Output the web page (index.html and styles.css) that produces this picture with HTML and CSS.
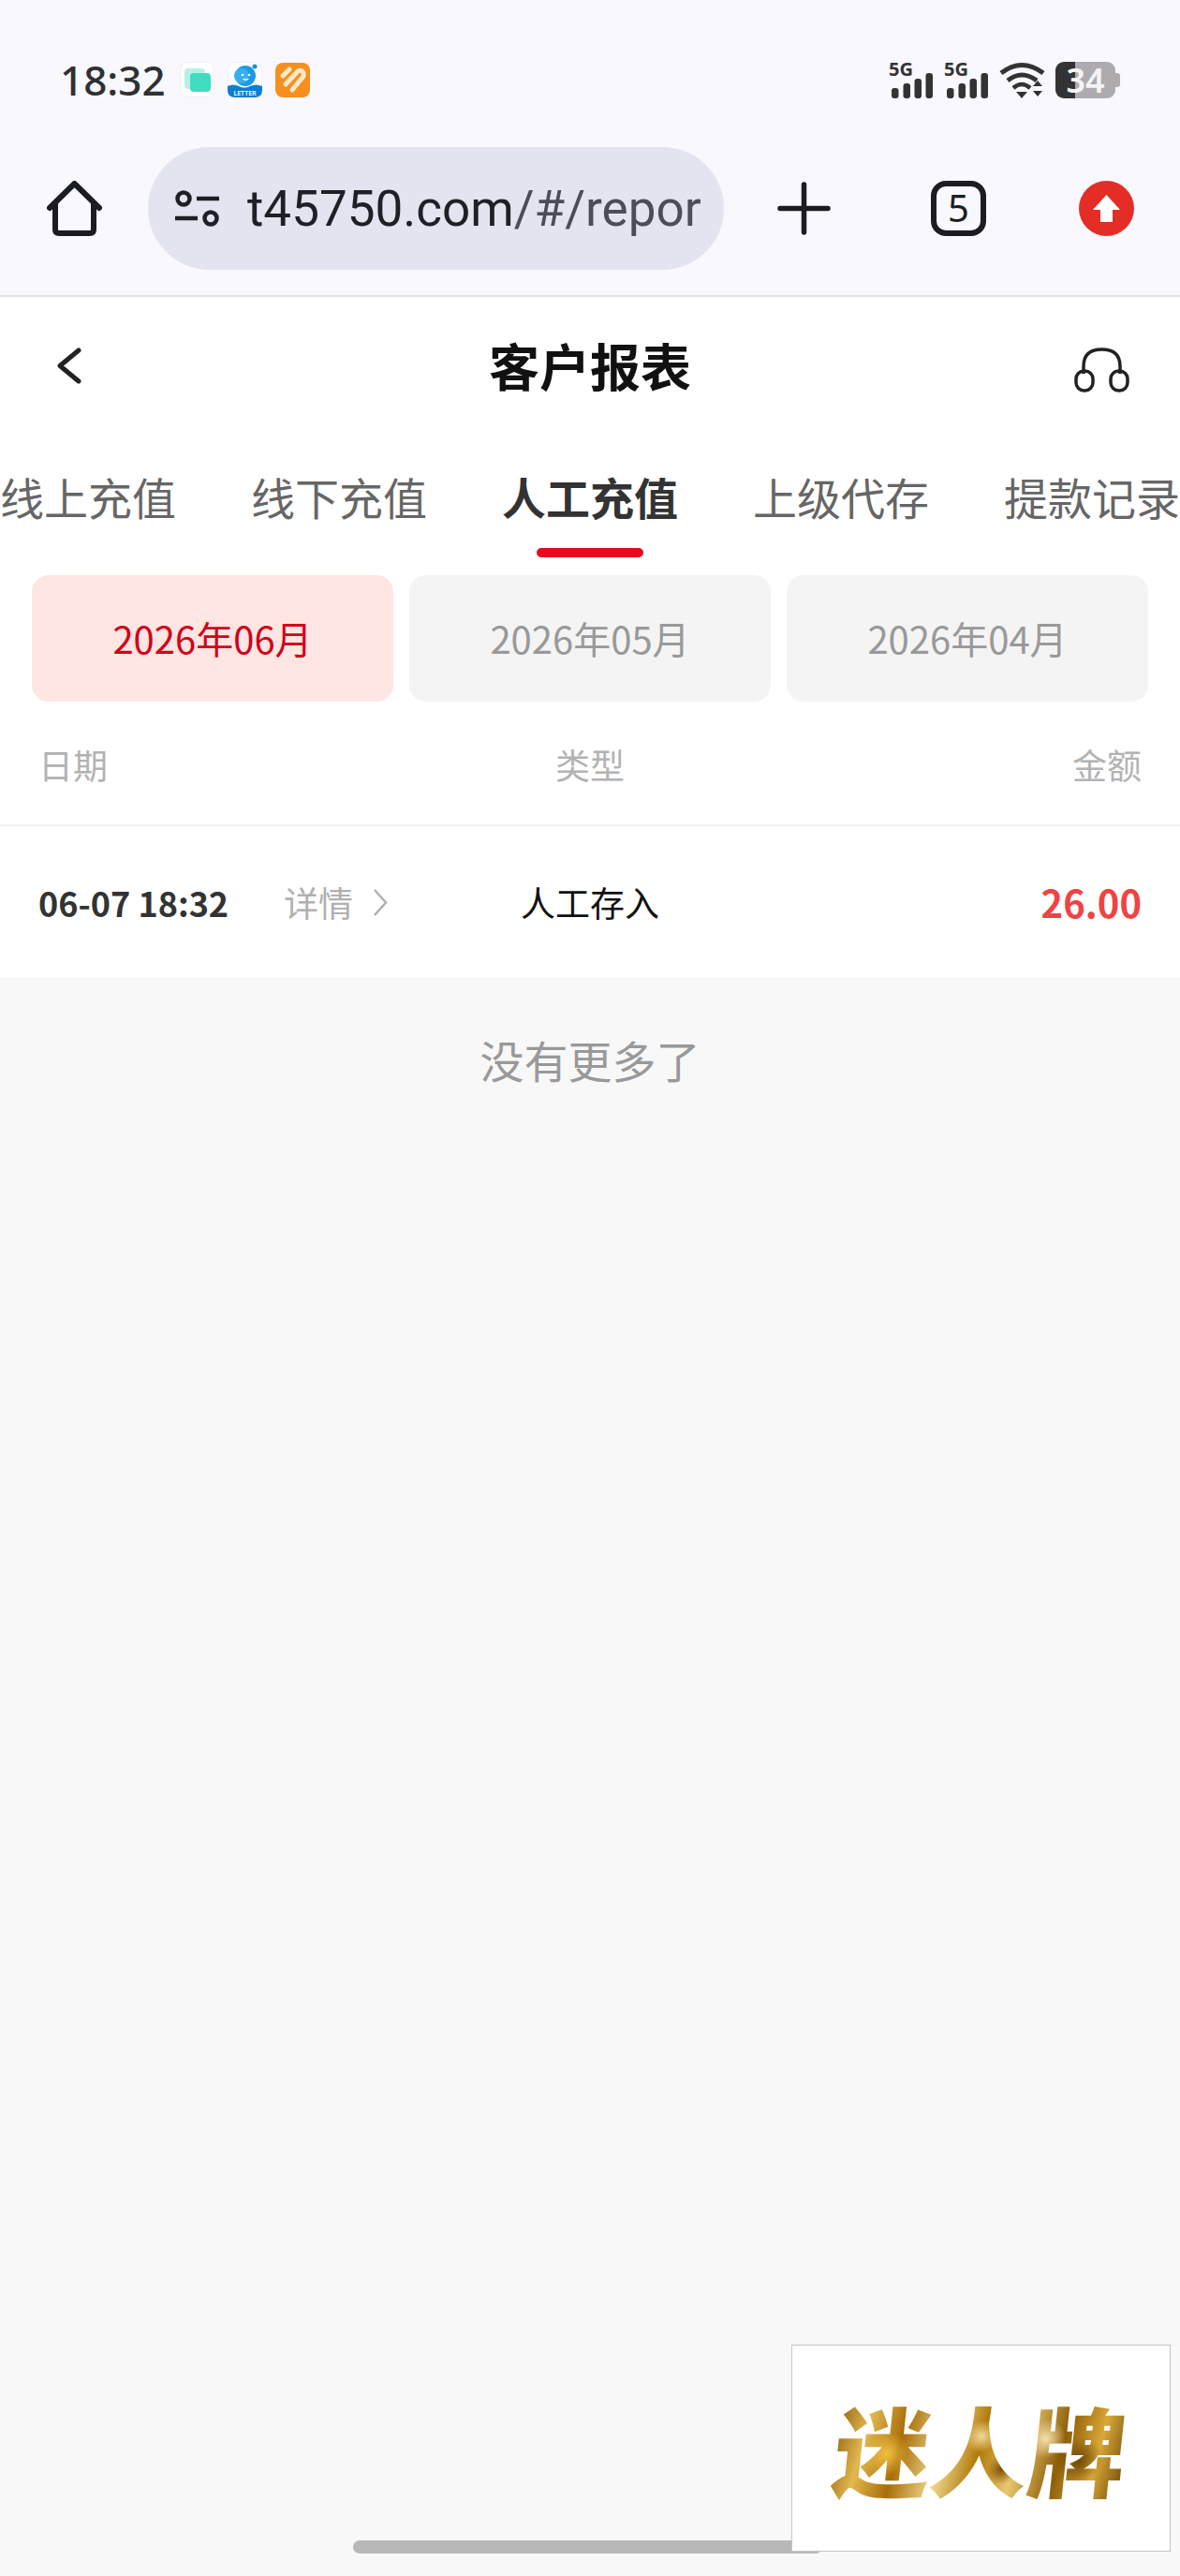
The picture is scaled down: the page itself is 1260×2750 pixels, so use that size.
FILE: index.html
```html
<!DOCTYPE html>
<html lang="zh-CN">
<head>
  <meta charset="UTF-8">
  <meta name="viewport" content="width=device-width, initial-scale=1.0">
  <title>客户报表</title>
  <link rel="stylesheet" href="styles.css">
</head>
<body>
  <div class="screen">
    <header class="browser">
      <div class="status-bar">
        <span class="time">18:32</span>
        <svg class="app-icon" viewBox="0 0 37 38">
          <rect x="0.5" y="0.5" width="36" height="37" rx="8" fill="#fff" stroke="#eef0f4"/>
          <rect x="5" y="7" width="22" height="22" rx="4" fill="#b4f3e2"/>
          <rect x="11" y="12" width="22" height="20" rx="4" fill="#3fdcc0"/>
        </svg>
        <svg class="app-icon" viewBox="0 0 37 38">
          <rect x="0.5" y="0.5" width="36" height="37" rx="8" fill="#fff" stroke="#eef0f4"/>
          <path d="M0 26 Q6 23 12 26 T24 26 T37 26 V30 Q37 38 29 38 H8 Q0 38 0 30 Z" fill="#0d7fd0"/>
          <circle cx="19" cy="15" r="11" fill="#1c9ae6"/>
          <circle cx="15" cy="15" r="8" fill="#36aef0"/>
          <circle cx="29" cy="5" r="2.5" fill="#1c8ed6"/>
          <circle cx="16" cy="14" r="1.3" fill="#fff"/>
          <circle cx="23" cy="14" r="1.3" fill="#fff"/>
          <path d="M16 18 Q19.5 22 23 18 Z" fill="#fff"/>
          <text class="letter" x="18.5" y="35.5" text-anchor="middle">LETTER</text>
        </svg>
        <svg class="app-icon" viewBox="0 0 37 38">
          <rect x="0" y="1" width="37" height="37" rx="8" fill="#f78f1e"/>
          <path d="M8 15 L15 8 M11 24 L24 10 Q28 8 30 12 Q31 15 28 18 L18 30" fill="none" stroke="#ffe9c9" stroke-width="5" stroke-linecap="round"/>
        </svg>
        <div class="status-right">
          <div class="signal">
            <span class="net">5G</span>
            <svg class="bars" viewBox="0 0 47 39">
              <rect x="3" y="28" width="7.5" height="11" rx="3"/>
              <rect x="15.5" y="23" width="7.5" height="16" rx="3"/>
              <rect x="27.5" y="18" width="7.5" height="21" rx="3"/>
              <rect x="39.5" y="12" width="7.5" height="27" rx="3"/>
            </svg>
          </div>
          <div class="signal">
            <span class="net">5G</span>
            <svg class="bars" viewBox="0 0 47 39">
              <rect x="3" y="28" width="7.5" height="11" rx="3"/>
              <rect x="15.5" y="23" width="7.5" height="16" rx="3"/>
              <rect x="27.5" y="18" width="7.5" height="21" rx="3"/>
              <rect x="39.5" y="12" width="7.5" height="27" rx="3"/>
            </svg>
          </div>
          <svg class="wifi" viewBox="0 0 49 39">
            <path d="M2 12 Q24 -5 47 12" fill="none" stroke="#333" stroke-width="5"/>
            <path d="M9 20 Q24 8 40 20" fill="none" stroke="#333" stroke-width="5"/>
            <path d="M15 28 Q24 20 33 28" fill="none" stroke="#333" stroke-width="4.5"/>
            <path d="M18 32 H30 L24 39 Z" fill="#333"/>
            <path d="M36 26 L41 20 L46 26 Z M36 31 H46 L41 37 Z" fill="#333"/>
          </svg>
          <div class="battery">34</div>
        </div>
      </div>
      <div class="toolbar">
        <svg class="tool-icon" viewBox="0 0 59 59">
          <path d="M3 29 L29.5 3 L56 29" fill="none" stroke="#1c1d22" stroke-width="6" stroke-linecap="round" stroke-linejoin="round"/>
          <path d="M9 24 V52 Q9 56 13 56 H46 Q50 56 50 52 V24" fill="none" stroke="#1c1d22" stroke-width="6"/>
        </svg>
        <div class="address">
          <svg class="site-icon" viewBox="0 0 49 39">
            <circle cx="10" cy="9" r="6.5" fill="none" stroke="#1f2026" stroke-width="4.5"/>
            <path d="M24 9 H48 M1 30 H25" stroke="#1f2026" stroke-width="4.5"/>
            <circle cx="39" cy="30" r="6.5" fill="none" stroke="#1f2026" stroke-width="4.5"/>
          </svg>
          <div class="url">t45750.com<span class="url-path">/#/repor</span></div>
        </div>
        <svg class="tool-icon plus" viewBox="0 0 59 59">
          <path d="M4 29.5 H55 M29.5 4 V55" stroke="#1c1d22" stroke-width="5.5" stroke-linecap="round"/>
        </svg>
        <div class="tab-count">5</div>
        <svg class="tool-icon upgrade" viewBox="0 0 59 59">
          <circle cx="29.5" cy="29.5" r="29.5" fill="#e52d27"/>
          <path d="M29.5 15 L44 31 H36 V44 H23 V31 H15 Z" fill="#fff"/>
        </svg>
      </div>
    </header>

    <div class="content">
      <div class="nav">
        <svg class="back" viewBox="0 0 27 39">
          <path d="M24 3 L4 19.5 L24 36" fill="none" stroke="#222" stroke-width="5" stroke-linecap="round" stroke-linejoin="round"/>
        </svg>
        <h1 class="title">客户报表</h1>
        <svg class="headset" viewBox="0 0 59 48">
          <path d="M10 28 V20 Q10 2 29.5 2 Q49 2 49 20 V28" fill="none" stroke="#222" stroke-width="3.5"/>
          <rect x="2" y="25" width="18" height="21" rx="8.5" fill="none" stroke="#222" stroke-width="3.5"/>
          <rect x="39" y="25" width="18" height="21" rx="8.5" fill="none" stroke="#222" stroke-width="3.5"/>
        </svg>
      </div>

      <div class="tabs">
        <div class="tab">线上充值</div>
        <div class="tab">线下充值</div>
        <div class="tab active">人工充值</div>
        <div class="tab">上级代存</div>
        <div class="tab">提款记录</div>
      </div>

      <div class="months">
        <div class="month active">2026年06月</div>
        <div class="month">2026年05月</div>
        <div class="month">2026年04月</div>
      </div>

      <div class="table-head">
        <span>日期</span>
        <span class="center">类型</span>
        <span class="right">金额</span>
      </div>
      <div class="table-row">
        <div class="date-cell">
          <span class="date">06-07 18:32</span>
          <span class="detail">详情</span>
          <svg class="chevron" viewBox="0 0 16 31">
            <path d="M2 2 L14 15.5 L2 29" fill="none" stroke="#b0b0b0" stroke-width="2.5"/>
          </svg>
        </div>
        <span class="type center">人工存入</span>
        <span class="amount right">26.00</span>
      </div>

      <div class="no-more">没有更多了</div>
    </div>

    <div class="home-bar"></div>
    <div class="float-ad"><span class="brand">迷人牌</span></div>
  </div>
</body>
</html>
```

FILE: styles.css
```css
* {
  box-sizing: border-box;
}

body {
  margin: 0;
  font-family: "Noto Sans CJK SC", "Noto Sans", sans-serif;
  background-color: #f8f8f8;
}

.screen {
  position: relative;
  width: 1260px;
  height: 2750px;
  overflow: hidden;
  display: flex;
  flex-direction: column;
}

/* browser chrome */
.browser {
  height: 317px;
  background-color: #f8f8fe;
  border-bottom: 2px solid #e2e2ea;
}

.status-bar {
  height: 157px;
  padding: 66px 69px 0 64px;
  display: flex;
  align-items: flex-start;
}

.time {
  width: 128px;
  height: 38px;
  line-height: 38px;
  font-family: "Noto Sans", sans-serif;
  font-size: 44px;
  font-weight: 500;
  color: #2f3033;
}

.app-icon {
  width: 37px;
  height: 38px;
  margin-right: 14px;
}

.letter {
  font-family: "Noto Sans", sans-serif;
  font-size: 7px;
  font-weight: 600;
  fill: #fff;
}

.status-right {
  margin-left: auto;
  display: flex;
  align-items: flex-start;
}

.signal {
  position: relative;
  width: 47px;
  height: 39px;
  margin-right: 12px;
}

.bars {
  display: block;
  width: 47px;
  height: 39px;
  fill: #333;
}

.net {
  position: absolute;
  left: 0;
  top: 0;
  font-family: "Noto Sans", sans-serif;
  font-size: 20px;
  font-weight: 700;
  line-height: 16px;
  color: #333;
}

.wifi {
  width: 49px;
  height: 39px;
  margin-right: 11px;
}

.battery {
  position: relative;
  width: 64px;
  height: 39px;
  border-radius: 9px;
  background: linear-gradient(90deg, #333 21px, #aeabb0 21px);
  color: #f4f4f4;
  font-family: "Noto Sans", sans-serif;
  font-size: 36px;
  font-weight: 600;
  line-height: 39px;
  text-align: center;
}

.battery::after {
  content: "";
  position: absolute;
  right: -5px;
  top: 12px;
  width: 5px;
  height: 15px;
  border-radius: 0 3px 3px 0;
  background-color: #aeabb0;
}

.toolbar {
  height: 131px;
  padding-left: 50px;
  display: flex;
  align-items: center;
}

.tool-icon {
  width: 59px;
  height: 59px;
  flex: none;
}

.address {
  width: 615px;
  height: 131px;
  margin-left: 49px;
  padding: 0 26px 0 28px;
  border-radius: 66px;
  background-color: #e3e4ef;
  display: flex;
  align-items: center;
}

.site-icon {
  width: 49px;
  height: 39px;
  flex: none;
  margin-right: 29px;
}

.url {
  flex: 1;
  white-space: nowrap;
  font-family: Roboto, sans-serif;
  font-size: 53px;
  color: #1f2026;
}

.url-path {
  color: #4c4d58;
}

.plus {
  margin-left: 56px;
}

.tab-count {
  width: 59px;
  height: 59px;
  margin-left: 106px;
  border: 6px solid #1c1d22;
  border-radius: 16px;
  font-family: "Noto Sans", sans-serif;
  font-size: 40px;
  line-height: 46px;
  text-align: center;
  color: #1c1d22;
}

.upgrade {
  margin-left: 99px;
}

/* page */
.content {
  flex: 1;
  background-color: #f8f8f8;
}

.nav {
  height: 145px;
  padding: 0 54px 0 60px;
  background-color: white;
  display: grid;
  grid-template-columns: 1fr auto 1fr;
  align-items: center;
}

.back {
  width: 27px;
  height: 39px;
  margin-top: 2px;
}

.title {
  margin: 0 6px 0 0;
  font-size: 54px;
  font-weight: 700;
  color: #111;
}

.headset {
  width: 59px;
  height: 48px;
  margin-top: 11px;
  justify-self: end;
}

.tabs {
  height: 140px;
  padding-bottom: 6px;
  background-color: white;
  display: flex;
  align-items: center;
  gap: 80px;
  overflow: hidden;
}

.tab {
  position: relative;
  flex: none;
  font-size: 47px;
  color: #666;
}

.tab.active {
  font-weight: 700;
  color: #333;
}

.tab.active::after {
  content: "";
  position: absolute;
  left: 37px;
  right: 37px;
  bottom: -31px;
  height: 10px;
  border-radius: 5px;
  background-color: #e60a20;
}

.months {
  padding: 12px 34px 0 34px;
  background-color: white;
  display: grid;
  grid-template-columns: repeat(3, 1fr);
  gap: 17px;
}

.month {
  height: 135px;
  border-radius: 18px;
  background-color: #f4f4f4;
  font-size: 40px;
  line-height: 135px;
  text-align: center;
  color: #999;
}

.month.active {
  background-color: #ffe6e2;
  color: #d0021b;
}

.table-head {
  height: 133px;
  padding: 2px 41px 0 41px;
  border-bottom: 2px solid #f3f3f3;
  background-color: white;
  display: grid;
  grid-template-columns: 1fr auto 1fr;
  align-items: center;
  font-size: 37px;
  color: #b3b3b3;
}

.table-row {
  height: 162px;
  padding: 0 41px;
  background-color: white;
  display: grid;
  grid-template-columns: 1fr auto 1fr;
  align-items: center;
}

.center {
  text-align: center;
}

.right {
  text-align: right;
}

.date-cell {
  display: flex;
  align-items: center;
}

.date {
  width: 262px;
  font-size: 36px;
  font-weight: 700;
  color: #333;
}

.detail {
  font-size: 37px;
  color: #b0b0b0;
}

.chevron {
  width: 16px;
  height: 31px;
  margin-left: 21px;
}

.type {
  font-size: 37px;
  color: #111;
}

.amount {
  font-size: 40px;
  font-weight: 700;
  color: #ef4444;
}

.no-more {
  padding-top: 52px;
  font-size: 47px;
  text-align: center;
  color: #999;
}

/* overlays */
.home-bar {
  position: absolute;
  left: 377px;
  top: 2712px;
  width: 501px;
  height: 14px;
  border-radius: 7px;
  background-color: #b8b8b8;
}

.float-ad {
  position: absolute;
  left: 845px;
  top: 2503px;
  width: 405px;
  height: 221px;
  border: 1px solid #c4c4c4;
  background-color: white;
  display: flex;
  align-items: center;
  justify-content: center;
}

.brand {
  display: block;
  font-size: 104px;
  font-weight: 900;
  line-height: 1.2;
  transform: skewX(-6deg);
  background:
    radial-gradient(circle at 18% 55%, #f0c040 0, transparent 9%),
    radial-gradient(circle at 50% 40%, #f3dc9a 0, transparent 10%),
    radial-gradient(circle at 58% 68%, #7c4d06 0, transparent 8%),
    radial-gradient(circle at 84% 60%, #6f4705 0, transparent 9%),
    radial-gradient(circle at 72% 42%, #f4e0a8 0, transparent 9%),
    linear-gradient(100deg, #8a5a0a 0%, #e2b850 12%, #a86e08 24%, #f0d890 38%, #b07808 50%, #e8c870 62%, #8f5f08 76%, #d8a838 88%, #6b4305 100%);
  -webkit-background-clip: text;
  background-clip: text;
  color: transparent;
}
```
